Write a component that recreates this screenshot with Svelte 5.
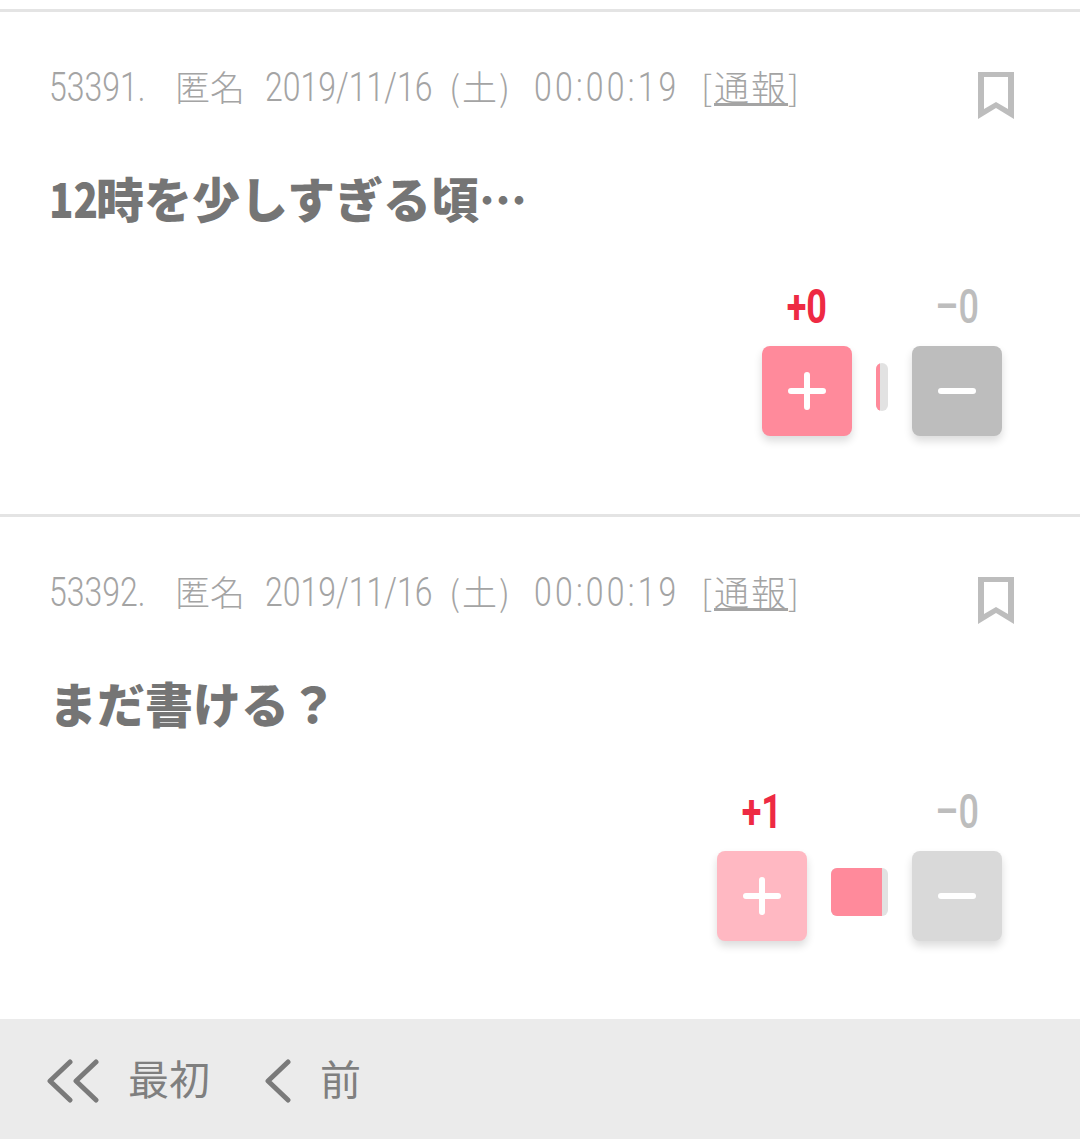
<script>
  const comments = [
    { no: "53391.", lead: "12", body: "時を少しすぎる頃…", plus: 0, minus: 0, bar: 4, total: 12, voted: false },
    { no: "53392.", lead: "", body: "まだ書ける？", plus: 1, minus: 0, bar: 51, total: 57, voted: true },
  ];
</script>

<div class="page">
  <div class="rule top"></div>
  {#each comments as c, i}
    <article class="comment">
      <div class="head">
        <div class="meta">
          <span class="no"><span class="narrow">{c.no}</span></span>
          <span class="name">匿名</span>
          <span class="date"><span class="narrow">2019/11/16</span></span>
          <span class="week">(土)</span>
          <span class="time"><span class="narrow">00:00:19</span></span>
          <span class="report">[<u>通報</u>]</span>
        </div>
        <svg class="bookmark" width="36" height="47" viewBox="0 0 36 47" aria-hidden="true">
          <path fill-rule="evenodd" d="M0 0H36V47L18 36L0 47ZM6 5V37L18 30L30 37V5Z" fill="#bdbdbd" />
        </svg>
      </div>
      <p class="body">{#if c.lead}<span class="lead"><span class="lead-text">{c.lead}</span></span>{/if}{c.body}</p>
      <div class="votes">
        <div class="vote" class:voted={c.voted}>
          <span class="count plus">+{c.plus}</span>
          <div class="btn btn-plus">
            <svg width="40" height="40" viewBox="0 0 40 40"><path d="M20 4V36M4 20H36" stroke="#fff" stroke-width="6" stroke-linecap="round" /></svg>
          </div>
        </div>
        <div class="bar" style="width: {c.total}px">
          <div class="bar-fill" style="width: {c.bar}px"></div>
        </div>
        <div class="vote" class:voted={c.voted}>
          <span class="count minus">–{c.minus}</span>
          <div class="btn btn-minus">
            <svg width="40" height="40" viewBox="0 0 40 40"><path d="M4 20H36" stroke="#fff" stroke-width="6" stroke-linecap="round" /></svg>
          </div>
        </div>
      </div>
    </article>
    {#if i < comments.length - 1}
      <div class="rule"></div>
    {/if}
  {/each}
  <nav class="pager">
    <svg class="dbl" width="52" height="44" viewBox="0 0 52 44" aria-hidden="true">
      <path d="M23 3L3 22L23 41M49 3L29 22L49 41" fill="none" stroke="#7a7a7a" stroke-width="5" stroke-linecap="round" stroke-linejoin="round" />
    </svg>
    <span class="first">最初</span>
    <svg class="sgl" width="28" height="44" viewBox="0 0 28 44" aria-hidden="true">
      <path d="M24 3L4 22L24 41" fill="none" stroke="#7a7a7a" stroke-width="5" stroke-linecap="round" stroke-linejoin="round" />
    </svg>
    <span class="prev">前</span>
  </nav>
</div>

<style>
  :global(body) {
    margin: 0;
    background: #fff;
  }

  .page {
    width: 1080px;
    height: 1145px;
    overflow: hidden;
    font-family: "Noto Sans CJK JP", sans-serif;
  }

  .rule {
    height: 3px;
    background: #e4e4e4;
  }

  .rule.top {
    margin-top: 9px;
  }

  .comment {
    height: 502px;
    box-sizing: border-box;
    padding: 48px 66px 0 49px;
  }

  .head {
    display: flex;
    justify-content: space-between;
    align-items: flex-start;
    height: 61px;
  }

  .meta {
    display: flex;
    align-items: baseline;
    font-size: 35px;
    line-height: 52px;
    color: #a4a4a4;
    font-weight: 300;
    white-space: nowrap;
  }

  .narrow {
    display: inline-block;
    font-family: Roboto, sans-serif;
    font-size: 40px;
    transform: scaleX(0.8);
    transform-origin: left;
  }

  .no {
    width: 126px;
  }

  .name {
    width: 90px;
  }

  .date {
    width: 178px;
  }

  .week {
    width: 85px;
    padding-left: 6px;
    letter-spacing: 2px;
  }

  .time {
    width: 169px;
  }

  .time .narrow {
    letter-spacing: 4px;
  }

  .report {
    margin-left: -2px;
    letter-spacing: 2px;
  }

  .bookmark {
    margin-top: 12px;
  }

  .body {
    margin: 41px 0 0;
    font-size: 48px;
    line-height: 70px;
    font-weight: 900;
    color: #757575;
  }

  .lead {
    display: inline-block;
    width: 47px;
  }

  .lead-text {
    display: inline-block;
    transform: scaleX(0.84);
    transform-origin: left;
  }

  .votes {
    display: flex;
    justify-content: flex-end;
    align-items: flex-end;
    margin-top: 45px;
    margin-right: 12px;
  }

  .vote {
    display: flex;
    flex-direction: column;
    align-items: center;
    width: 90px;
  }

  .count {
    font-family: Roboto, sans-serif;
    font-size: 48px;
    line-height: 60px;
    font-weight: 700;
    margin-bottom: 9px;
    transform: scaleX(0.75);
  }

  .plus {
    color: #ee2a43;
  }

  .minus {
    color: #bdbdbd;
    font-weight: 500;
  }

  .btn {
    width: 90px;
    height: 90px;
    border-radius: 8px;
    display: flex;
    align-items: center;
    justify-content: center;
    box-shadow: 0 5px 8px rgba(0, 0, 0, 0.14);
  }

  .btn-plus {
    background: #ff8a9b;
  }

  .btn-minus {
    background: #bdbdbd;
  }

  .voted .btn-plus {
    background: #ffb8c2;
  }

  .voted .btn-minus {
    background: #d9d9d9;
  }

  .bar {
    height: 48px;
    margin: 0 24px 25px;
    background: #e2e2e2;
    border-radius: 6px;
    overflow: hidden;
  }

  .bar-fill {
    height: 100%;
    background: #ff8a9b;
  }

  .pager {
    display: flex;
    align-items: center;
    height: 120px;
    box-sizing: border-box;
    padding-left: 47px;
    padding-bottom: 5px;
    background: #ebebeb;
    font-size: 41px;
    color: #7f7f7f;
  }

  .dbl {
    margin: 8px 29px 0 0;
  }

  .first {
    margin-right: 54px;
  }

  .sgl {
    margin: 8px 28px 0 0;
  }
</style>
